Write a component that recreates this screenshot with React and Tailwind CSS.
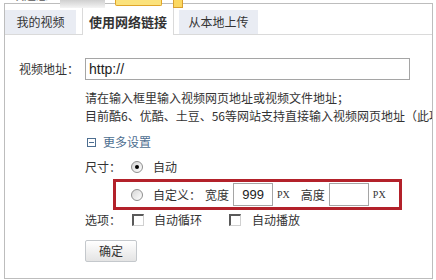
function Radio({ checked }) {
  return (
    <span className="w-[12px] h-[12px] shrink-0 rounded-full border border-[#8e8e8e] bg-gradient-to-br from-[#d6d6d6] to-white flex items-center justify-center">
      {checked && <span className="w-[4px] h-[4px] rounded-full bg-black" />}
    </span>
  );
}

function Checkbox({ className = '' }) {
  return (
    <span className={`block w-[12px] h-[12px] shrink-0 bg-white border-t-2 border-l-2 border-r border-b border-t-[#5a5a5a] border-l-[#5a5a5a] border-r-[#d0d0d0] border-b-[#d0d0d0] ${className}`} />
  );
}

export default function App() {
  return (
    <div className="relative w-[436px] h-[280px] overflow-hidden bg-white text-[12px] leading-[18px] text-[#333] font-['Noto_Sans_CJK_SC',sans-serif]">
      {/* cut-off page header above the panel */}
      <div className="absolute left-[12px] top-[-13px] text-[12px] leading-[16px] text-[#555]">欢迎您：</div>
      <div className="absolute left-[60px] top-0 w-[45px] h-[8px] bg-gradient-to-b from-[#cfcfcf] to-[#f4f4f4]" />
      <div className="absolute left-[115px] top-0 w-[47px] h-[6px] bg-[#fbe27c] border border-t-0 border-[#e0a528] rounded-b-[2px]" />
      <div className="absolute left-[173px] top-0 w-[10px] h-[8px] bg-[#fbd862] border border-t-0 border-[#d9a030]" />

      <div className="pt-[3px] pl-[4px]">
        <div className="w-[429px] h-[276px] border border-[#bdbdbd] overflow-hidden">
          {/* tabs */}
          <div className="flex items-end h-[31px] border-b border-[#dadada]">
            <div className="w-[71px] h-[24px] bg-[#e9ecf3] flex items-center justify-center">我的视频</div>
            <div className="ml-[6px] w-[92px] h-[31px] -mb-px pt-[5px] bg-white border-x border-[#dadada] flex items-center justify-center font-bold text-[13px]">
              使用网络链接
            </div>
            <div className="ml-[5px] w-[79px] h-[24px] bg-[#e9ecf3] flex items-center justify-center">从本地上传</div>
          </div>

          {/* url row */}
          <div className="mt-[23px] flex items-center h-[22px]">
            <div className="w-[80px] pl-[14px]">视频地址：</div>
            <div className="w-[325px] h-[22px] border border-[#a5a5a5] flex items-center pl-[3px] font-['Liberation_Sans',sans-serif] text-[14px] text-[#222]">
              http://
            </div>
          </div>

          <div className="pl-[80px]">
            <div className="mt-[9px] whitespace-nowrap">请在输入框里输入视频网页地址或视频文件地址；</div>
            <div className="whitespace-nowrap">目前酷6、优酷、土豆、56等网站支持直接输入视频网页地址（此项功能暂不支持其他网站）</div>

            <div className="mt-[8px] flex items-center h-[18px] text-[#4d6e90]">
              <span className="ml-[2px] w-[9px] h-[9px] border border-[#4d6e90] flex items-center justify-center">
                <span className="w-[5px] h-px bg-[#4d6e90]" />
              </span>
              <span className="ml-[7px]">更多设置</span>
            </div>

            <div className="mt-[7px] flex items-center h-[18px]">
              <span className="w-[46px]">尺寸：</span>
              <Radio checked />
              <span className="ml-[10px]">自动</span>
            </div>

            <div className="mt-[3px] ml-[28px] w-[289px] h-[31px] border-[3px] border-[#b3212a] flex items-center pl-[15px]">
              <Radio />
              <span className="ml-[10px]">自定义：</span>
              <span className="ml-[4px]">宽度</span>
              <span className="ml-[4px] w-[40px] h-[23px] border border-[#a5a5a5] flex items-center justify-center font-['Liberation_Sans',sans-serif] text-[13px] text-[#222]">
                999
              </span>
              <span className="ml-[4px] font-['Liberation_Serif',serif] text-[10px]">PX</span>
              <span className="ml-[11px]">高度</span>
              <span className="ml-[4px] w-[40px] h-[23px] border border-[#a5a5a5]" />
              <span className="ml-[4px] font-['Liberation_Serif',serif] text-[10px]">PX</span>
            </div>

            <div className="mt-[1px] flex items-center h-[18px]">
              <span className="w-[47px]">选项：</span>
              <Checkbox />
              <span className="ml-[10px]">自动循环</span>
              <Checkbox className="ml-[27px]" />
              <span className="ml-[11px]">自动播放</span>
            </div>

            <button className="mt-[11px] w-[52px] h-[22px] border border-[#c4c8cc] rounded-[2px] bg-gradient-to-b from-white to-[#e4e4e4] text-[12px] text-[#333] flex items-center justify-center">
              确定
            </button>
          </div>
        </div>
      </div>
    </div>
  );
}
